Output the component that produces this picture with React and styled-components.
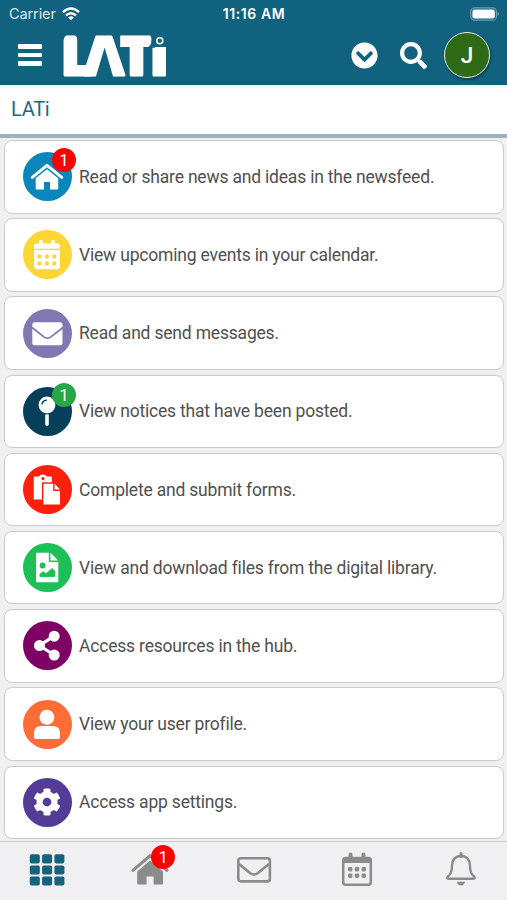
import React from "react";
import styled, { createGlobalStyle } from "styled-components";
import { FaCog, FaSearch, FaChevronCircleDown } from "react-icons/fa";

const GlobalStyle = createGlobalStyle`
  * {
    box-sizing: border-box;
  }
  body {
    margin: 0;
    font-family: Roboto, "Liberation Sans", sans-serif;
  }
`;
const Screen = styled.div`
  width: 100%;
  height: 900px;
  display: flex;
  flex-direction: column;
  overflow: hidden;
  background-color: #f0f0f1;
`;
const Header = styled.header`
  flex: none;
  height: 85px;
  background-color: #11627f;
  color: #ffffff;
`;
const StatusBar = styled.div`
  height: 27px;
  padding: 0 7px 0 9px;
  display: grid;
  grid-template-columns: 1fr auto 1fr;
  align-items: center;
  font-family: Inter, sans-serif;
  font-size: 14.5px;
`;
const Carrier = styled.div`
  display: flex;
  align-items: center;
  gap: 6px;
  color: #dce9ee;
  letter-spacing: -0.1px;
`;
const Clock = styled.div`
  padding-right: 1px;
  font-weight: 600;
  font-size: 14px;
  letter-spacing: 0.6px;
`;
const Battery = styled.svg`
  justify-self: end;
`;
const Toolbar = styled.div`
  height: 56px;
  padding: 0 17px 0 18px;
  display: flex;
  align-items: center;
`;
const MenuButton = styled.div`
  width: 24px;
  display: flex;
  flex-direction: column;
  gap: 4.4px;
`;
const MenuLine = styled.span`
  height: 4.2px;
  border-radius: 1px;
  background-color: #ffffff;
`;
const Logo = styled.svg`
  flex: none;
  margin-left: 20px;
  margin-right: auto;
  font-family: Inter, sans-serif;
  font-weight: 900;
  font-size: 52.5px;
`;
const Actions = styled.div`
  display: flex;
  align-items: center;
  gap: 22px;
`;
const Avatar = styled.div`
  width: 46px;
  height: 46px;
  margin-left: -5px;
  display: flex;
  align-items: center;
  justify-content: center;
  border: 1.5px solid #e6eee4;
  border-radius: 50%;
  background-color: #2f6a19;
  box-shadow: 1px 2px 3px rgba(0, 0, 0, 0.35);
  font-size: 22.5px;
  font-weight: 500;
`;
const Title = styled.h1`
  flex: none;
  height: 53px;
  margin: 0;
  padding: 0 11px 4px;
  line-height: 49px;
  border-bottom: 4px solid #9db2bc;
  background-color: #ffffff;
  color: #236681;
  font-size: 20px;
  font-weight: 400;
  letter-spacing: -0.3px;
`;
const List = styled.main`
  flex: 1;
  min-height: 0;
  padding: 2px 3px 0 3.5px;
  display: flex;
  flex-direction: column;
  gap: 4.7px;
`;
const Card = styled.div`
  flex: none;
  height: 73.5px;
  padding-left: 18px;
  display: flex;
  align-items: center;
  gap: 7.5px;
  border: 1.5px solid #cbcbcd;
  border-radius: 8px;
  background-color: #ffffff;
  color: #505050;
  font-size: 17.5px;
  letter-spacing: -0.195px;
`;
const Circle = styled.div`
  position: relative;
  width: 49px;
  height: 49px;
  display: flex;
  align-items: center;
  justify-content: center;
  border-radius: 50%;
  background-color: ${(props) => props.$color};
  color: #ffffff;
`;
const Badge = styled.span`
  position: absolute;
  top: ${(props) => props.$top};
  left: ${(props) => props.$left};
  width: 24px;
  height: 24px;
  border-radius: 50%;
  background-color: ${(props) => props.$color};
  color: #ffffff;
  font-size: 17px;
  line-height: 24px;
  text-align: center;
`;
const TabBar = styled.nav`
  flex: none;
  height: 59px;
  padding: 0 21.5px 0 22px;
  display: flex;
  justify-content: space-between;
  align-items: center;
  border-top: 1.5px solid #c9c9cb;
  background-color: #f0f0f2;
`;
const Tab = styled.div`
  position: relative;
  width: 50px;
  height: 58px;
  display: flex;
  justify-content: center;
  color: ${(props) => (props.$active ? "#13627e" : "#8b8b8c")};
`;

const Glyph = ({ children }) => (
  <svg width="49" height="49" viewBox="0 0 49 49" fill="#fff">
    {children}
  </svg>
);

const HomeIcon = () => (
  <Glyph>
    <path
      d="M9.3 25.3L24 13.3l14.7 12"
      fill="none"
      stroke="#fff"
      strokeWidth="3"
      strokeLinecap="round"
      strokeLinejoin="round"
    />
    <path d="M12.7 26.2L24 17.2l11.2 9V36.5q0 1-1 1H27v-7.5h-6v7.5h-7.3q-1 0-1-1z" />
  </Glyph>
);

const CalendarIcon = ({ color }) => (
  <Glyph>
    <rect x="16" y="10" width="4" height="6" rx="1.5" />
    <rect x="28" y="10" width="4" height="6" rx="1.5" />
    <path d="M11 18.8v-2.2q0-3 3-3h20q3 0 3 3v2.2z" />
    <path d="M11 20h26v16.2q0 3-3 3H14q-3 0-3-3z" />
    {[16.4, 23.9, 31.3].map((x) =>
      [26.5, 33.5].map((y) => (
        <rect
          key={`${x}-${y}`}
          x={x - 1.9}
          y={y - 1.9}
          width="3.8"
          height="3.8"
          rx="1.2"
          fill={color}
        />
      ))
    )}
  </Glyph>
);

const MailIcon = ({ color }) => (
  <Glyph>
    <rect x="9.3" y="13.3" width="30.2" height="23" rx="2.6" />
    <path
      d="M9 18.5l12.2 9.6q3.2 2.2 6.4 0L40 18.5"
      fill="none"
      stroke={color}
      strokeWidth="1.7"
    />
  </Glyph>
);

const PinIcon = ({ color }) => (
  <Glyph>
    <circle cx="24" cy="18" r="8.4" />
    <path d="M22.2 27.6h3.6v9.4q0 2-1.8 2t-1.8-2z" />
    <path
      d="M19 16.8q.8-3.2 4.4-3.7"
      fill="none"
      stroke={color}
      strokeWidth="1.4"
      strokeLinecap="round"
    />
  </Glyph>
);

const PasteIcon = ({ color }) => (
  <Glyph>
    <path d="M10.8 11.5h5q1-2 4-2t4 2h5v23h-18z" />
    <circle cx="20" cy="13.6" r="1.6" fill={color} />
    <path d="M18.9 17.3h19v23h-19z" fill={color} />
    <path d="M20.4 18.7h9.8v7.2h6.8v13.6H20.4z" />
    <path d="M31.6 18.7L37 24.4h-5.4z" />
  </Glyph>
);

const FileImageIcon = ({ color }) => (
  <Glyph>
    <path d="M14 9.7h11.8v9.2h9.5v19.4q0 1-1 1H14q-1 0-1-1V10.7q0-1 1-1z" />
    <path d="M27.4 9.7l7.9 7.7h-7.9z" />
    <circle cx="19.6" cy="22.4" r="3" fill={color} />
    <path
      d="M17 33.4v-2.2l3-2.5 3 2.3 6-5.4 2.8 2.6v5.2z"
      fill={color}
      stroke={color}
      strokeLinejoin="round"
    />
  </Glyph>
);

const ShareIcon = () => (
  <Glyph>
    <path d="M31 15.2L16.5 24.5 31 34" fill="none" stroke="#fff" strokeWidth="3.2" />
    <circle cx="31.2" cy="15.2" r="5.5" />
    <circle cx="16.5" cy="24.5" r="5.5" />
    <circle cx="31.2" cy="34" r="5.5" />
  </Glyph>
);

const UserIcon = () => (
  <Glyph>
    <circle cx="23.9" cy="17.2" r="7.5" />
    <path d="M11 37v-3.6q0-7.3 7.3-7.3h11.4q7.3 0 7.3 7.3V37q0 2-2 2H13q-2 0-2-2z" />
  </Glyph>
);

const items = [
  { text: "Read or share news and ideas in the newsfeed.", color: "#0a86ba", icon: HomeIcon, badge: "#ff0000" },
  { text: "View upcoming events in your calendar.", color: "#fcd734", icon: CalendarIcon },
  { text: "Read and send messages.", color: "#8078b0", icon: MailIcon },
  { text: "View notices that have been posted.", color: "#073f5b", icon: PinIcon, badge: "#28a745" },
  { text: "Complete and submit forms.", color: "#fc200d", icon: PasteIcon },
  { text: "View and download files from the digital library.", color: "#1dc056", icon: FileImageIcon },
  { text: "Access resources in the hub.", color: "#7d0264", icon: ShareIcon },
  { text: "View your user profile.", color: "#fe6d35", icon: UserIcon },
  { text: "Access app settings.", color: "#523c98", icon: () => <FaCog size={28} /> },
];

// wordmark: an A without its crossbar and a ring for the dot of the i
const Wordmark = () => (
  <Logo width="108" height="72" viewBox="0 -13 108 72" fill="#fff">
    <text
      x="0.8 21.3 56.6 89.6"
      y="43.2"
      stroke="#fff"
      strokeWidth="3.2"
      strokeLinejoin="round"
    >
      LATi
    </text>
    <g fill="#11627f">
      <path d="M42.6 15.5L51.5 46H33.5z" />
      <path d="M89.7 0H107v15H89.7z" />
      <path d="M1 2h6.4Q2.4 3 1.6 8H1zM17.5 2H9.8q5 1 6 6h1.7z" />
      <path d="M93 1h-8q4.5 1.5 4.5 7T85 15.8h8z" />
      <path d="M51.6 1h6.6v15h-3z" />
    </g>
    <path d="M92.2 22q0-6.5 5.6-6.5t5.6 6.5z" />
    <circle cx="97.8" cy="8.7" r="3" fill="none" stroke="#fff" strokeWidth="1.5" />
  </Logo>
);

const App = () => {
  return (
    <>
      <GlobalStyle />
      <Screen>
        <Header>
          <StatusBar>
            <Carrier>
              Carrier
              <svg width="18" height="14" viewBox="0 0 18 14" fill="none" stroke="#fff" strokeWidth="2.4">
                <path d="M1 5.2Q9-2.2 17 5.2M4 8.4q5-4.4 10 0" />
                <path d="M9 13.2L6.2 10.4q2.8-2.2 5.6 0z" fill="#fff" stroke="none" />
              </svg>
            </Carrier>
            <Clock>11:16 AM</Clock>
            <Battery width="30" height="14" viewBox="0 0 30 14">
              <rect x="0.8" y="0.8" width="25.6" height="12.4" rx="3.8" fill="none" stroke="#6c9eb0" strokeWidth="1.2" />
              <rect x="2.4" y="2.4" width="22.4" height="9.2" rx="2.4" fill="#fff" />
              <path d="M27.6 4.8q3 2.2 0 4.4z" fill="#6c9eb0" />
            </Battery>
          </StatusBar>
          <Toolbar>
            <MenuButton>
              <MenuLine />
              <MenuLine />
              <MenuLine />
            </MenuButton>
            <Wordmark />
            <Actions>
              <FaChevronCircleDown size={27} />
              <FaSearch size={27} />
              <Avatar>J</Avatar>
            </Actions>
          </Toolbar>
        </Header>
        <Title>LATi</Title>
        <List>
          {items.map(({ text, color, icon: Icon, badge }) => (
            <Card key={text}>
              <Circle $color={color}>
                <Icon color={color} />
                {badge && (
                  <Badge $color={badge} $top="-4.3px" $left="29.5px">
                    1
                  </Badge>
                )}
              </Circle>
              <span>{text}</span>
            </Card>
          ))}
        </List>
        <TabBar>
          <Tab $active>
            <svg width="36" height="58" viewBox="0 0 36 58" fill="currentColor">
              {[0.8, 13.1, 25.4].map((x) =>
                [12.3, 23.4, 34.5].map((y) => (
                  <rect key={`${x}-${y}`} x={x} y={y} width="10" height="9.1" rx="1.8" />
                ))
              )}
            </svg>
          </Tab>
          <Tab>
            <svg width="40" height="58" viewBox="0 0 40 58" fill="currentColor">
              <path
                d="M3 28.3L20 13.8l17 14.5"
                fill="none"
                stroke="currentColor"
                strokeWidth="3"
                strokeLinecap="round"
              />
              <path d="M7.2 29.6L20 18.6l13 11v12q0 1-1 1h-8.4v-8h-7v8H8.2q-1 0-1-1z" />
            </svg>
            <Badge $color="#ff0000" $top="3px" $left="26px">
              1
            </Badge>
          </Tab>
          <Tab>
            <svg width="36" height="58" viewBox="0 0 36 58" fill="none" stroke="currentColor" strokeWidth="2.6">
              <rect x="2.3" y="16.2" width="31.6" height="23.2" rx="2.6" />
              <path d="M3 22.1l11 8.9q4 3 8 0l11-8.9" />
            </svg>
          </Tab>
          <Tab>
            <svg width="32" height="58" viewBox="0 0 32 58" fill="currentColor">
              <rect x="7.6" y="10.5" width="3.8" height="7" rx="1.5" />
              <rect x="20.6" y="10.5" width="3.8" height="7" rx="1.5" />
              <rect x="2.2" y="15.9" width="27.6" height="26.8" rx="2.5" fill="none" stroke="currentColor" strokeWidth="2.5" />
              <path d="M2 16h28v5H2z" />
              {[9.2, 16, 22.8].map((x) =>
                [27.3, 33.8].map((y) => (
                  <rect key={`${x}-${y}`} x={x - 2.2} y={y - 2.2} width="4.4" height="4.4" rx="1.4" />
                ))
              )}
            </svg>
          </Tab>
          <Tab>
            <svg width="32" height="58" viewBox="0 0 32 58" fill="none" stroke="currentColor" strokeWidth="2.4">
              <path
                d="M16 14c-5.6 0-9 4-9 9.4C7 30 5.6 32.2 2.5 35q-.7 1.8 1.2 1.8h24.6q1.9 0 1.2-1.8C26.4 32.2 25 30 25 23.4 25 18 21.6 14 16 14z"
                strokeLinejoin="round"
              />
              <path d="M16 11.5v3" strokeWidth="3" strokeLinecap="round" />
              <path d="M12 39.8h8q-.6 3.6-4 3.6t-4-3.6z" fill="currentColor" stroke="none" />
            </svg>
          </Tab>
        </TabBar>
      </Screen>
    </>
  );
};

export default App;
